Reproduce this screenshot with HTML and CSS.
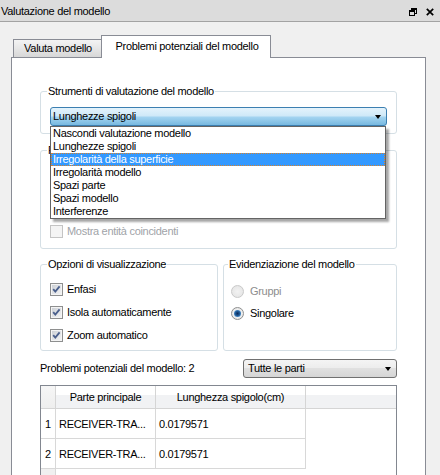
FILE: index.html
```html
<!DOCTYPE html>
<html lang="it">
<head>
<meta charset="utf-8">
<title>Valutazione del modello</title>
<link rel="stylesheet" href="styles.css">
</head>
<body>
<div class="titlebar">
  <span class="title">Valutazione del modello</span>
  <span class="winbtns">
    <svg class="wbtn" width="8" height="8" viewBox="0 0 8 8"><path d="M2 0h6v6h-2v-1h1v-3h-4v1h-1z" fill="#000"/><path d="M0 2h6v6h-6z M1 4v3h4v-3z" fill="#000" fill-rule="evenodd"/></svg>
    <svg class="wbtn" width="8" height="8" viewBox="0 0 8 8"><path d="M0.8 0.8L7.2 7.2M7.2 0.8L0.8 7.2" stroke="#000" stroke-width="1.7"/></svg>
  </span>
</div>
<div class="main">
  <div class="tabs">
    <div class="tab tab-inactive">Valuta modello</div>
    <div class="tab tab-active">Problemi potenziali del modello</div>
  </div>
  <div class="panel">
    <fieldset class="group g-tools">
      <legend>Strumenti di valutazione del modello</legend>
      <div class="combo-wrap">
        <div class="combo combo-open"><span>Lunghezze spigoli</span><span class="arrow"></span></div>
        <ul class="droplist">
          <li>Nascondi valutazione modello</li>
          <li>Lunghezze spigoli</li>
          <li class="sel">Irregolarità della superficie</li>
          <li>Irregolarità modello</li>
          <li>Spazi parte</li>
          <li>Spazi modello</li>
          <li>Interferenze</li>
        </ul>
      </div>
    </fieldset>
    <fieldset class="group g-params">
      <legend>Parametri</legend>
      <div class="covered"></div>
      <div class="opt disabled"><span class="cb cb-off"></span><span>Mostra entità coincidenti</span></div>
    </fieldset>
    <div class="two-groups">
      <fieldset class="group g-display">
        <legend>Opzioni di visualizzazione</legend>
        <div class="opts opts-check">
          <div class="opt"><span class="cb"><svg width="11" height="11" viewBox="0 0 11 11"><path d="M2.2 5.2L4.3 7.6L8.6 2.4" fill="none" stroke="#4a5f8c" stroke-width="1.8"/></svg></span><span>Enfasi</span></div>
          <div class="opt"><span class="cb"><svg width="11" height="11" viewBox="0 0 11 11"><path d="M2.2 5.2L4.3 7.6L8.6 2.4" fill="none" stroke="#4a5f8c" stroke-width="1.8"/></svg></span><span>Isola automaticamente</span></div>
          <div class="opt"><span class="cb"><svg width="11" height="11" viewBox="0 0 11 11"><path d="M2.2 5.2L4.3 7.6L8.6 2.4" fill="none" stroke="#4a5f8c" stroke-width="1.8"/></svg></span><span>Zoom automatico</span></div>
        </div>
      </fieldset>
      <fieldset class="group g-highlight">
        <legend>Evidenziazione del modello</legend>
        <div class="opts opts-radio">
          <div class="opt disabled-radio"><span class="rb rb-off"></span><span>Gruppi</span></div>
          <div class="opt"><span class="rb"><span class="dot"></span></span><span>Singolare</span></div>
        </div>
      </fieldset>
    </div>
    <div class="issues-bar">
      <span>Problemi potenziali del modello: 2</span>
      <div class="combo combo-gray"><span>Tutte le parti</span><span class="arrow"></span></div>
    </div>
    <div class="tbl">
      <div class="th th-num"></div>
      <div class="th">Parte principale</div>
      <div class="th">Lunghezza spigolo(cm)</div>
      <div class="th th-fill"></div>

      <div class="td td-num">1</div>
      <div class="td">RECEIVER-TRA...</div>
      <div class="td">0.0179571</div>
      <div class="td-fill"></div>

      <div class="td td-num">2</div>
      <div class="td">RECEIVER-TRA...</div>
      <div class="td">0.0179571</div>
      <div class="td-fill"></div>

      <div class="td-empty-num"></div>
      <div class="td-fill"></div>
      <div class="td-fill"></div>
      <div class="td-fill"></div>
    </div>
  </div>
</div>
</body>
</html>
```
FILE: styles.css
```css
html, body {
  margin: 0;
  padding: 0;
}
body {
  width: 440px;
  height: 475px;
  overflow: hidden;
  background: #f0f0f0;
  font-family: "Liberation Sans", Arial, sans-serif;
  font-size: 11px;
  line-height: 13px;
  letter-spacing: -0.3px;
  color: #000;
}

/* title bar */
.titlebar {
  border-bottom: 1px solid #a3a3a3;
  background: #dcdcdc;
  display: flex;
  align-items: center;
  justify-content: space-between;
  padding: 2px 6px 0 1px;
  box-sizing: content-box;
  height: 19px;
}
.winbtns {
  display: flex;
  gap: 9px;
  align-items: center;
  padding-top: 1px;
}
.wbtn { display: block; }

/* tabs */
.main {
  padding-left: 11px;
}
.tabs {
  display: flex;
  align-items: flex-end;
  padding-left: 2px;
  margin-top: 13px;
  margin-bottom: -1px;
}
.tab {
  box-sizing: border-box;
  border: 1px solid #898c95;
  border-bottom: none;
  text-align: center;
  white-space: nowrap;
}
.tab-inactive {
  width: 90px;
  height: 18px;
  padding-top: 2px;
  margin-bottom: 1px;
  background: linear-gradient(#f3f3f3, #e6e6e6 50%, #d7d7d7);
}
.tab-active {
  width: 170px;
  height: 23px;
  margin-left: -2px;
  padding-top: 4px;
  padding-left: 2px;
  background: #fff;
  position: relative;
  z-index: 1;
}

/* panel */
.panel {
  box-sizing: border-box;
  width: 415px;
  height: 440px;
  border: 1px solid #898c95;
  background: #fff;
  padding: 27px 28px 0;
}

.group {
  margin: 0;
  min-width: 0;
  border: 1px solid #d5dfe5;
  border-radius: 3px;
}
.group legend {
  padding: 0 1px;
  margin-left: -3px;
  line-height: 12px;
}

.g-tools {
  padding: 10px 9px 7px;
}
.combo-wrap {
  position: relative;
}
.combo {
  box-sizing: border-box;
  height: 19px;
  display: flex;
  align-items: center;
  justify-content: space-between;
  border-radius: 3px;
  white-space: nowrap;
}
.combo-open {
  border: 1px solid #3c7fb1;
  padding: 0 5px 0 2px;
  background: linear-gradient(#e4f3fc 0%, #cfe9f8 45%, #a2d3f0 55%, #78b9e0 100%);
}
.arrow {
  width: 0;
  height: 0;
  border-left: 3.5px solid transparent;
  border-right: 3.5px solid transparent;
  border-top: 4px solid #000;
}
.droplist {
  position: absolute;
  top: 100%;
  left: 0;
  right: 1px;
  margin: 0;
  padding: 0;
  list-style: none;
  background: #fff;
  border: 1px solid #646464;
  box-shadow: 3px 3px 2px rgba(0, 0, 0, 0.35);
  z-index: 5;
}
.droplist li {
  height: 13px;
  line-height: 13px;
  padding-left: 2px;
  white-space: nowrap;
}
.droplist li.sel {
  background: #3399ff;
  color: #fff;
  outline: 1px dotted #d9822b;
  outline-offset: -1px;
}

.g-params {
  margin-top: 10px;
  padding: 0 9px 10px;
}
.covered {
  height: 68px;
}

.opt {
  display: flex;
  align-items: center;
  gap: 4px;
  height: 16px;
  white-space: nowrap;
}
.g-params .opt {
  height: 14px;
}
.disabled {
  color: #a0a3a8;
}
.disabled-radio {
  color: #8d8d8d;
}

.cb {
  box-sizing: border-box;
  width: 13px;
  height: 13px;
  flex: none;
  border: 1px solid #8e8f8f;
  box-shadow: inset 0 0 0 1px #f4f4f4;
  background: linear-gradient(135deg, #c9cdd3, #f6f6f6);
  display: flex;
  align-items: center;
  justify-content: center;
}
.cb svg { display: block; }
.cb-off {
  border-color: #c4c4c4;
  box-shadow: none;
  background: #f4f4f4;
}

.two-groups {
  display: flex;
  gap: 5px;
  margin-top: 9px;
}
.g-display {
  box-sizing: border-box;
  width: 178px;
  flex: none;
  padding: 11px 9px 7px;
}
.g-highlight {
  flex: 1;
  padding: 13px 7px 7px;
}
.opts {
  display: flex;
  flex-direction: column;
}
.opts-check { gap: 7px; }
.opts-check .opt { gap: 4px; }
.opts-radio { gap: 6px; }
.opts-radio .opt { gap: 6px; }

.rb {
  box-sizing: border-box;
  width: 13px;
  height: 13px;
  flex: none;
  border-radius: 50%;
  border: 1px solid #8e8f8f;
  background: radial-gradient(circle, #ffffff 0, #dedede 100%);
  display: flex;
  align-items: center;
  justify-content: center;
}
.rb-off {
  border-color: #c9c9c9;
  background: radial-gradient(circle, #f2f2f2 0, #e2e2e2 100%);
}
.rb .dot {
  width: 7px;
  height: 7px;
  border-radius: 50%;
  background: radial-gradient(circle, #0c2a5a 0, #1d548f 40%, #4d92cf 75%, #9ccbee 100%);
}

/* issues bar */
.issues-bar {
  display: flex;
  justify-content: space-between;
  align-items: center;
  margin-top: 8px;
  height: 19px;
}
.combo-gray {
  width: 154px;
  border: 1px solid #707070;
  padding: 0 5px 0 4px;
  background: linear-gradient(#f4f4f4 0%, #ececec 50%, #e0e0e0 50%, #d5d5d5 100%);
}

/* table */
.tbl {
  margin-top: 7px;
  height: 110px;
  border: 1px solid #828790;
  display: grid;
  grid-template-columns: 15px 100px 150px 1fr;
  grid-template-rows: 23px 30px 30px 1fr;
  background: #fff;
}
.th {
  box-sizing: border-box;
  border-right: 1px solid #d5d5d5;
  border-bottom: 1px solid #d5d5d5;
  background: linear-gradient(#ffffff 0, #ffffff 40%, #f1f2f4 40%, #f1f2f4 100%);
  display: flex;
  align-items: center;
  justify-content: center;
  white-space: nowrap;
  padding-top: 1px;
}
.th-num {
  background: linear-gradient(#f6f6f6, #eeeeee);
}
.th-fill {
  border-right: none;
}
.td {
  box-sizing: border-box;
  border-right: 1px solid #d8d8d8;
  border-bottom: 1px solid #d8d8d8;
  display: flex;
  align-items: center;
  padding-left: 3px;
  white-space: nowrap;
  overflow: hidden;
  padding-top: 2px;
}
.td-num {
  justify-content: center;
  padding-left: 0;
}
.td-fill {
  background: #fff;
}
.td-empty-num {
  background: #f0f0f0;
  border-right: 1px solid #d8d8d8;
}
```
